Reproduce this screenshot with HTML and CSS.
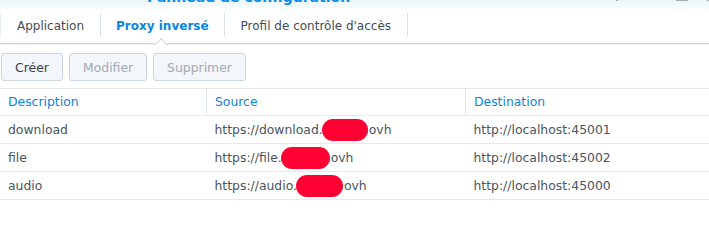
FILE: index.html
```html
<!DOCTYPE html>
<html lang="fr">
<head>
  <meta charset="UTF-8">
  <title>Panneau de configuration</title>
  <link rel="stylesheet" href="styles.css">
</head>
<body>

<div class="titlebar">
  <span class="title">Panneau de configuration</span>
  <span class="ctrl c1"></span>
  <span class="ctrl c2"></span>
  <span class="ctrl c3"></span>
</div>

<div class="tabs">
  <div class="tab">Application</div>
  <div class="tab active">Proxy inversé</div>
  <div class="tab">Profil de contrôle d'accès</div>
  <div class="tab last"></div>
</div>

<div class="toolbar">
  <button class="btn">Créer</button>
  <button class="btn" disabled>Modifier</button>
  <button class="btn" disabled>Supprimer</button>
</div>

<table class="grid">
  <thead>
    <tr><th class="col1">Description</th><th class="col2">Source</th><th>Destination</th></tr>
  </thead>
  <tbody>
    <tr><td>download</td><td>https://download.<span class="hide w1"></span>.ovh</td><td>http://localhost:45001</td></tr>
    <tr><td>file</td><td>https://file.<span class="hide w2"></span>.ovh</td><td>http://localhost:45002</td></tr>
    <tr><td>audio</td><td>https://audio.<span class="hide w3"></span>.ovh</td><td>http://localhost:45000</td></tr>
  </tbody>
</table>

</body>
</html>
```

FILE: styles.css
```css
body {
  margin: 0;
  font-family: "DejaVu Sans", Verdana, sans-serif;
  font-size: 12px;
  background: white;
  color: #4a5560;
}

.titlebar {
  position: relative;
  height: 12px;
  overflow: hidden;
  background: linear-gradient(to bottom, #eaf6fa, #ffffff);
}

.title {
  position: absolute;
  left: 147px;
  top: -11px;
  font-size: 14px;
  font-weight: bold;
  color: #0b8ee6;
}

.ctrl {
  position: absolute;
  top: 0;
  height: 1px;
  background: #a8adb2;
}
.c1 { left: 616px; width: 2px; }
.c2 { left: 676px; width: 12px; }
.c3 { left: 707px; width: 2px; }

.tabs {
  display: flex;
  height: 31px;
  border-bottom: 1px solid #d4d7da;
  box-shadow: 0 1px 1px rgba(0, 0, 0, 0.05);
  position: relative;
}

.tab {
  position: relative;
  padding: 0 16px;
  font-size: 12px;
  color: #444c55;
  border-left: 1px solid #dbe3ea;
  height: 24px;
  margin-top: 1px;
  line-height: 27px;
}

.tab:first-child {
  border-left-color: #e8eef3;
}

.tab.active {
  color: #0a86e0;
  font-weight: bold;
  padding: 0 15px;
}

.tab.active::after {
  content: "";
  position: absolute;
  left: 50%;
  bottom: -13px;
  margin-left: -6px;
  width: 9px;
  height: 9px;
  background: white;
  border-left: 1px solid #d4d7da;
  border-top: 1px solid #d4d7da;
  transform: rotate(45deg);
}

.toolbar {
  display: flex;
  gap: 6px;
  padding: 9px 0 0 1px;
}

.btn {
  height: 28px;
  padding: 0 13px;
  font-family: inherit;
  font-size: 12.4px;
  color: #37414b;
  background: #f3f6fa;
  border: 1px solid #c9d5e1;
  border-radius: 3px;
}

.btn:first-child { width: 62px; }
.btn:nth-child(2) { width: 78px; }
.btn:nth-child(3) { width: 93px; }

.btn:disabled {
  color: #a2aab2;
}

.grid {
  width: 100%;
  margin-top: 7px;
  border-collapse: collapse;
  border-top: 1px solid #e1e7ed;
}

.grid th, .grid td {
  padding: 0 0 0 8px;
  text-align: left;
  height: 27px;
  font-size: 12.4px;
  border-bottom: 1px solid #e6eaee;
}

.grid th {
  font-weight: normal;
  color: #0a86d8;
  height: 26px;
  vertical-align: top;
  line-height: 25px;
  border-left: 1px solid #e1e7ed;
}

.grid th:first-child { border-left: none; }

.col1 { width: 198px; }
.col2 { width: 250px; }

.hide {
  display: inline-block;
  height: 22px;
  margin: 0 -3px 0 -1px;
  vertical-align: middle;
  background: #ff0033;
  border-radius: 12px;
}
.w1 { width: 46px; }
.w2 { width: 49px; }
.w3 { width: 47px; }
```
